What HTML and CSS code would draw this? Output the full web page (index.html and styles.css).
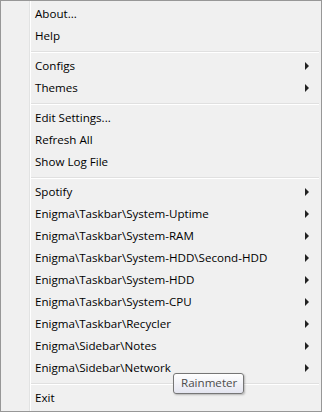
FILE: index.html
```html
<!DOCTYPE html>
<html lang="en">
<head>
    <meta charset="UTF-8">
    <title>Rainmeter menu</title>
    <link rel="stylesheet" href="styles.css">
</head>
<body>
    <div class="menu">
        <div class="item">About...</div>
        <div class="item">Help</div>
        <div class="sep"></div>
        <div class="item sub">Configs</div>
        <div class="item sub">Themes</div>
        <div class="sep"></div>
        <div class="item">Edit Settings...</div>
        <div class="item">Refresh All</div>
        <div class="item">Show Log File</div>
        <div class="sep"></div>
        <div class="item sub">Spotify</div>
        <div class="item sub">Enigma\Taskbar\System-Uptime</div>
        <div class="item sub">Enigma\Taskbar\System-RAM</div>
        <div class="item sub">Enigma\Taskbar\System-HDD\Second-HDD</div>
        <div class="item sub">Enigma\Taskbar\System-HDD</div>
        <div class="item sub">Enigma\Taskbar\System-CPU</div>
        <div class="item sub">Enigma\Taskbar\Recycler</div>
        <div class="item sub">Enigma\Sidebar\Notes</div>
        <div class="item sub">Enigma\Sidebar\Network</div>
        <div class="sep"></div>
        <div class="item">Exit</div>

        <div class="tooltip">Rainmeter</div>
    </div>
</body>
</html>
```

FILE: styles.css
```css
body {
    margin: 0;
    background: #fff;
    font-family: "Open Sans", "Noto Sans", sans-serif;
    font-size: 11.6px;
    color: #000;
}
.menu {
    position: relative;
    width: 322px;
    height: 412px;
    box-sizing: border-box;
    border: 1px solid #979797;
    padding: 2px;
    background: linear-gradient(to right, #f0f0f0 28px, #e2e3e3 28px, #e2e3e3 29px, #fff 29px, #fff 30px, #f0f0f0 30px);
}
.item {
    position: relative;
    height: 22px;
    line-height: 22px;
    padding-left: 32px;
    white-space: nowrap;
}
.item.sub::after {
    content: "";
    position: absolute;
    right: 10px;
    top: 7px;
    border-left: 4px solid #222;
    border-top: 4px solid transparent;
    border-bottom: 4px solid transparent;
}
.sep {
    height: 8px;
    margin-left: 28px;
    box-sizing: border-box;
    padding-top: 4px;
}
.sep::before {
    content: "";
    display: block;
    border-top: 1px solid #e0e0e0;
    border-bottom: 1px solid #fff;
}
.tooltip {
    position: absolute;
    left: 172px;
    top: 372px;
    padding: 1px 6px 2px 7px;
    line-height: 16px;
    color: #4c4c4c;
    border: 1px solid #767676;
    border-radius: 3px;
    background: linear-gradient(#fff, #e4e5f0);
    box-shadow: 1px 1px 2px rgba(0,0,0,0.25);
}
```
